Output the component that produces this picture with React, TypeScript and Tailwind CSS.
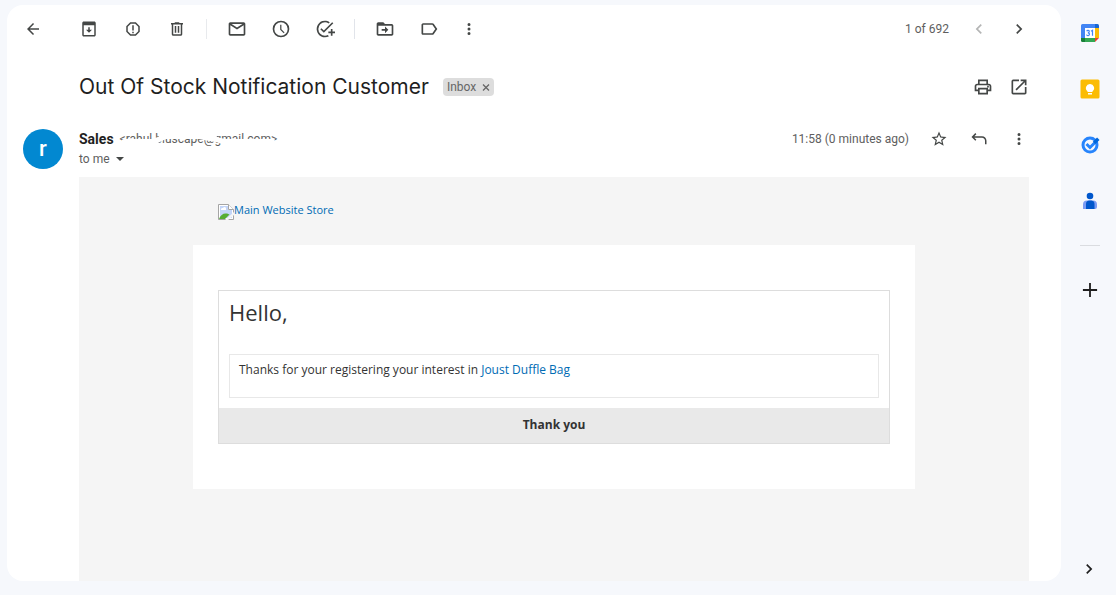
import type { ReactNode } from "react";

type GlyphProps = { d: string; size?: string };

function Glyph({ d, size = "size-5" }: GlyphProps) {
  return (
    <svg viewBox="0 0 24 24" fill="currentColor" fillRule="evenodd" className={`${size} shrink-0`} aria-hidden="true">
      <path d={d} />
    </svg>
  );
}

const paths = {
  back: "M20 11H7.83l5.59-5.59L12 4l-8 8 8 8 1.41-1.41L7.83 13H20z",
  archive:
    "M19 2H5C3.9 2 3 2.9 3 4v16c0 1.1.9 2 2 2h14c1.1 0 2-.9 2-2V4c0-1.1-.9-2-2-2zM5 7h14v13H5zM11 9.500h2V13h3l-4 4-4-4h3z",
  spam: "M15.730 3H8.270L3 8.270v7.460L8.270 21h7.460L21 15.730V8.270zM19 14.900L14.900 19H9.100L5 14.900V9.100L9.100 5h5.800L19 9.100zM11 7h2v7h-2zM11 15.500h2v2h-2z",
  trash:
    "M15 4V3H9v1H4v2h1v13c0 1.100.900 2 2 2h10c1.100 0 2-.900 2-2V6h1V4zM17 19H7V6h10zM9 8h2v9H9zM13 8h2v9h-2z",
  mail: "M20 4H4c-1.100 0-2 .900-2 2v12c0 1.100.900 2 2 2h16c1.100 0 2-.900 2-2V6c0-1.100-.900-2-2-2zM18.500 6L12 10.300 5.500 6zM4 18V7.500l8 5 8-5V18z",
  clock:
    "M12 2a10 10 0 100 20 10 10 0 000-20zM12 20a8 8 0 110-16 8 8 0 010 16zM12.500 7H11v6l4.250 4.150 1.050-1.030-3.800-3.770z",
  task: "M22 5.180L10.590 16.600l-4.240-4.240 1.410-1.410 2.830 2.830 10-10zM12 20a8 8 0 110-16c1.570 0 3.040.460 4.280 1.250l1.450-1.450A10 10 0 1012 22c1.730 0 3.360-.440 4.780-1.220l-1.500-1.500A7.900 7.900 0 0112 20zM19 15h-3v2h3v3h2v-3h3v-2h-3v-3h-2z",
  move: "M20 6h-8l-2-2H4c-1.100 0-2 .900-2 2v12c0 1.100.900 2 2 2h16c1.100 0 2-.900 2-2V8c0-1.100-.900-2-2-2zM20 18H4V8h16zM12 9l4 4-4 4v-3H8v-2h4z",
  label:
    "M17.630 5.840C17.270 5.330 16.670 5 16 5H5c-1.100 0-2 .900-2 2v10c0 1.100.900 2 2 2h11c.670 0 1.270-.330 1.630-.840L22 12zM16 17H5V7h11l3.550 5z",
  more: "M12 8a2 2 0 100-4 2 2 0 000 4zM12 10a2 2 0 100 4 2 2 0 000-4zM12 16a2 2 0 100 4 2 2 0 000-4z",
  left: "M15.410 7.410L14 6l-6 6 6 6 1.410-1.410L10.830 12z",
  right: "M8.590 16.590L13.170 12 8.590 7.410 10 6l6 6-6 6z",
  print:
    "M19 8h-1V3H6v5H5c-1.660 0-3 1.340-3 3v6h4v4h12v-4h4v-6c0-1.660-1.340-3-3-3zM8 5h8v3H8zM16 19H8v-4h8zM18 15v-2H6v2H4v-4c0-.550.450-1 1-1h14c.550 0 1 .450 1 1v4zM17 10.500h2v2h-2z",
  open: "M19 19H5V5h7V3H5a2 2 0 00-2 2v14a2 2 0 002 2h14c1.100 0 2-.900 2-2v-7h-2zM14 3v2h3.590l-9.830 9.830 1.410 1.410L19 6.410V10h2V3z",
  star: "M22 9.240l-7.190-.620L12 2 9.190 8.630 2 9.240l5.460 4.730L5.820 21 12 17.270 18.180 21l-1.630-7.030zM12 15.400l-3.760 2.270 1-4.280-3.320-2.880 4.380-.380L12 6.100l1.710 4.040 4.380.380-3.320 2.880 1 4.280z",
  reply: "M8.500 5.500L7.100 4.100 2 9.200l5.100 5.100 1.400-1.400-2.700-2.700H16c2.200 0 4 1.800 4 4V19h2v-4.800c0-3.300-2.700-6-6-6H5.800z",
  plus: "M20.500 13.100h-7.400v7.400h-2.200v-7.400H3.500v-2.200h7.400V3.500h2.200v7.400h7.400z",
};

function IconButton({ label, children, disabled = false }: { label: string; children: ReactNode; disabled?: boolean }) {
  return (
    <button
      type="button"
      aria-label={label}
      disabled={disabled}
      className="flex size-5 shrink-0 items-center justify-center text-[#444746] disabled:text-[#b4b5b5]"
    >
      {children}
    </button>
  );
}

function Toolbar() {
  return (
    <div className="flex h-12 items-center pr-8 pl-4">
      <IconButton label="Back to inbox"><Glyph d={paths.back} size="size-[18px]" /></IconButton>
      <div className="ml-9 flex items-center gap-6">
        <IconButton label="Archive"><Glyph d={paths.archive} size="size-[18px]" /></IconButton>
        <IconButton label="Report spam"><Glyph d={paths.spam} size="size-[18px]" /></IconButton>
        <IconButton label="Delete"><Glyph d={paths.trash} size="size-[18px]" /></IconButton>
      </div>
      <div className="mr-5 ml-[19px] h-5 w-px bg-[#e8eaed]" />
      <div className="flex items-center gap-6">
        <IconButton label="Mark as unread"><Glyph d={paths.mail} /></IconButton>
        <IconButton label="Snooze"><Glyph d={paths.clock} /></IconButton>
        <IconButton label="Add to tasks"><Glyph d={paths.task} /></IconButton>
      </div>
      <div className="mr-5 ml-[19px] h-5 w-px bg-[#e1e4ea]" />
      <div className="flex items-center gap-6">
        <IconButton label="Move to"><Glyph d={paths.move} /></IconButton>
        <IconButton label="Labels"><Glyph d={paths.label} /></IconButton>
      </div>
      <div className="ml-5 flex"><IconButton label="More"><Glyph d={paths.more} size="size-[18px]" /></IconButton></div>
      <span className="ml-auto text-xs text-[#5e5e5e]">1 of 692</span>
      <div className="ml-5 flex gap-5">
        <IconButton label="Newer" disabled><Glyph d={paths.left} /></IconButton>
        <IconButton label="Older"><Glyph d={paths.right} /></IconButton>
      </div>
    </div>
  );
}

function Subject() {
  return (
    <div className="flex h-8 items-center pr-8 pl-18">
      <h1 className="font-['Inter','Roboto',sans-serif] text-[21px] leading-8 text-[#1f1f1f]">Out Of Stock Notification Customer</h1>
      <span className="ml-3.5 flex h-[18px] items-center gap-1.5 rounded bg-[#ddd] px-1 text-xs text-[#666]">
        Inbox
        <button type="button" aria-label="Remove label Inbox" className="flex">
          <svg viewBox="0 0 8 8" className="size-2" fill="none" stroke="currentColor" strokeWidth="1.300">
            <path d="M1 1.500l6 6M7 1.500l-6 6" />
          </svg>
        </button>
      </span>
      <div className="ml-auto flex gap-4">
        <IconButton label="Print"><Glyph d={paths.print} /></IconButton>
        <IconButton label="Open in new window"><Glyph d={paths.open} /></IconButton>
      </div>
    </div>
  );
}

function Sender() {
  return (
    <div className="mt-6 flex items-start pr-8 pl-4">
      <div className="mt-0.5 flex size-10 items-center justify-center rounded-full bg-[#0288d1] pb-0.5 text-[22px] font-medium text-white">r</div>
      <div className="ml-4">
        <div className="flex h-6 items-center gap-1.5">
          <span className="text-sm font-bold text-[#1f1f1f]">Sales</span>
          <span className="relative text-xs text-[#5e5e5e]">
            &lt;rahul.bluscape@gmail.com&gt;
            <svg className="absolute inset-0 size-full" viewBox="0 0 158 16" preserveAspectRatio="none" fill="#fff" aria-hidden="true">
              <path d="M2 9l4-1h26l6-2 4-3V0h3v3h4V0h48v6l8 2h50v6h-50l-9-3-18-3H46l-8 4-6 4H2z" />
            </svg>
          </span>
        </div>
        <div className="flex h-4 items-center gap-1 text-xs text-[#5e5e5e]">
          to me
          <button type="button" aria-label="Show details" className="flex text-[#444746]">
            <svg viewBox="0 0 12 12" className="size-3" fill="currentColor"><path d="M2 4h8L6 8z" /></svg>
          </button>
        </div>
      </div>
      <div className="ml-auto flex h-6 items-center">
        <time className="text-xs text-[#5e5e5e]">11:58 (0 minutes ago)</time>
        <div className="ml-5 flex gap-5">
          <IconButton label="Star"><Glyph d={paths.star} size="size-[18px]" /></IconButton>
          <IconButton label="Reply"><Glyph d={paths.reply} size="size-[18px]" /></IconButton>
          <IconButton label="More"><Glyph d={paths.more} size="size-[18px]" /></IconButton>
        </div>
      </div>
    </div>
  );
}

function BrokenImage() {
  return (
    <svg viewBox="0 0 16 16" className="size-4" aria-hidden="true">
      <path d="M.5.5h10l5 5v10H.5z" fill="#fff" stroke="#a5a5a5" />
      <path d="M2 2h8v4h4v8H2z" fill="#c3d5f8" />
      <path d="M3 5.500a1.500 1.500 0 012-1.500 1.700 1.700 0 013 0v2H3z" fill="#fff" />
      <path d="M1 15c1-3.500 4-5.500 6.500-5.500 2 0 3 .5 4 1L7 15z" fill="#56ad33" />
      <path d="M16 8l-9 8h3l6-5z" fill="#f5f5f5" />
      <path d="M10.500.5v5h5" fill="#fff" stroke="#a5a5a5" />
    </svg>
  );
}

function MessageBody() {
  return (
    <article className="mr-8 ml-18 flex-1 bg-[#f5f5f5] px-[114px] font-['Open_Sans','Noto_Sans',sans-serif] text-[#333]">
      <a href="#store" className="flex h-17 items-center px-[25px] pt-0.5 text-[11px] text-[#006bb4]">
        <BrokenImage />
        <span className="pb-1">Main Website Store</span>
      </a>
      <div className="bg-white px-[25px] py-[45px]">
        <div className="border border-[#ddd]">
          <h2 className="px-2.5 pt-[5px] text-[22px] leading-8 font-normal">Hello,</h2>
          <div className="mx-2.5 mt-[26px] h-11 border border-[#e8e8e8] px-[9px] py-1.5 text-xs leading-[18px]">
            Thanks for your registering your interest in <a href="#bag" className="text-[#006bb4]">Joust Duffle Bag</a>
          </div>
          <p className="mt-2.5 h-[35px] bg-[#e9e9e9] text-center text-xs leading-[34px] font-bold">Thank you</p>
        </div>
      </div>
    </article>
  );
}

function SidePanel() {
  return (
    <aside className="flex w-[55px] shrink-0 flex-col items-center pt-[23px] pb-4">
      <div className="flex flex-col items-center gap-9 pl-0.5">
        <button type="button" aria-label="Calendar">
          <svg viewBox="0 0 20 20" className="size-5">
            <path d="M2.500 1H15v4H5v10H1V2.500A1.500 1.500 0 012.500 1z" fill="#4285f4" />
            <path d="M15 1h2.500A1.500 1.500 0 0119 2.500V5h-4z" fill="#1967d2" />
            <path d="M15 5h4v10h-4z" fill="#fbbc04" />
            <path d="M5 15h10v4H5z" fill="#34a853" />
            <path d="M1 15h4v4H2.500A1.500 1.500 0 011 17.500z" fill="#188038" />
            <path d="M15 15h4l-4 4z" fill="#ea4335" />
            <path d="M5 5h10v10H5z" fill="#fff" />
            <path d="M6.700 8.200c.6-1.400 2.700-1 2.600.4 0 .9-.8 1.200-1.500 1.200.9 0 1.800.5 1.700 1.500-.1 1.500-2.400 1.800-3 .3M11 8.200l1.500-.9v5.400" fill="none" stroke="#4285f4" strokeWidth="1.200" />
          </svg>
        </button>
        <button type="button" aria-label="Keep">
          <svg viewBox="0 0 20 20" className="size-5">
            <rect x=".5" y=".5" width="19" height="19" rx="1.500" fill="#fbbc04" />
            <path d="M10 5a4 4 0 00-2.500 7.200V13h5v-.8A4 4 0 0010 5zM8 14h4v1.500H8z" fill="#fff" />
          </svg>
        </button>
        <button type="button" aria-label="Tasks">
          <svg viewBox="0 0 20 20" className="size-5" fill="none">
            <circle cx="10" cy="10" r="7" stroke="#2684fc" strokeWidth="3" />
            <path d="M6.500 9l3.500 3.500 4.500-4.500" stroke="#2684fc" strokeWidth="3" />
            <path d="M14 8l4.300-4.300" stroke="#0066da" strokeWidth="3.400" />
          </svg>
        </button>
        <button type="button" aria-label="Contacts">
          <svg viewBox="0 0 20 20" className="size-5">
            <circle cx="10" cy="5" r="3.300" fill="#0057cc" />
            <path d="M3 18v-4.500a4 4 0 014-4h6a4 4 0 014 4V16a2 2 0 01-2 2z" fill="#7b9cf4" />
            <path d="M6 18v-5a3.500 3.500 0 013.500-3.500h2A3.500 3.500 0 0114.500 13v5z" fill="#0057cc" />
          </svg>
        </button>
        <hr className="-mt-0.5 w-5 border-[#dadce0]" />
        <button type="button" aria-label="Get add-ons" className="-mt-0.5 text-[#1f1f1f]"><Glyph d={paths.plus} /></button>
      </div>
      <button type="button" aria-label="Hide side panel" className="mt-auto text-[#1f1f1f]"><Glyph d={paths.right} /></button>
    </aside>
  );
}

export default function App() {
  return (
    <div className="flex min-h-screen bg-[#f6f8fc] pl-[7px] font-['Roboto','Liberation_Sans',sans-serif]">
      <main className="mt-[5px] mb-3.5 flex min-w-0 flex-1 flex-col overflow-hidden rounded-2xl bg-white">
        <Toolbar />
        <div className="mt-[18px]"><Subject /></div>
        <Sender />
        <div className="mt-2 flex flex-1 flex-col"><MessageBody /></div>
      </main>
      <SidePanel />
    </div>
  );
}
